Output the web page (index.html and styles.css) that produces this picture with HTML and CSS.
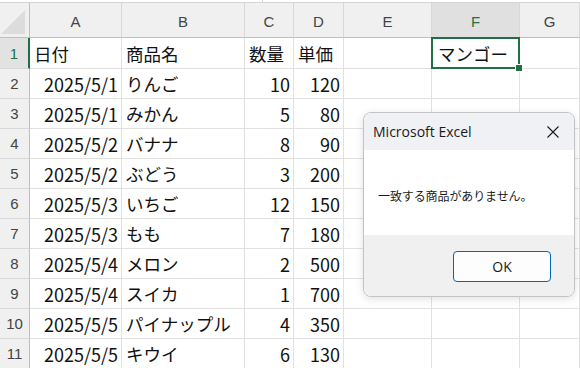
FILE: index.html
```html
<!DOCTYPE html>
<html lang="ja">
<head>
    <meta charset="UTF-8">
    <title>Microsoft Excel</title>
    <link rel="stylesheet" href="styles.css">
</head>
<body>
    <div class="sheet">
        <div class="topbar">
            <div class="namebox"></div>
            <div class="formula"></div>
        </div>
        <div class="row head">
            <div class="corner"></div>
            <div class="colhead">A</div>
            <div class="colhead">B</div>
            <div class="colhead">C</div>
            <div class="colhead">D</div>
            <div class="colhead">E</div>
            <div class="colhead sel">F</div>
            <div class="colhead">G</div>
        </div>
        <div class="row first">
            <div class="rowhead sel">1</div>
            <div class="cell">日付</div>
            <div class="cell">商品名</div>
            <div class="cell">数量</div>
            <div class="cell">単価</div>
            <div class="cell"></div>
            <div class="cell active">マンゴー</div>
            <div class="cell"></div>
        </div>
        <div class="row">
            <div class="rowhead">2</div>
            <div class="cell num">2025/5/1</div>
            <div class="cell">りんご</div>
            <div class="cell num">10</div>
            <div class="cell num">120</div>
            <div class="cell"></div><div class="cell"></div><div class="cell"></div>
        </div>
        <div class="row">
            <div class="rowhead">3</div>
            <div class="cell num">2025/5/1</div>
            <div class="cell">みかん</div>
            <div class="cell num">5</div>
            <div class="cell num">80</div>
            <div class="cell"></div><div class="cell"></div><div class="cell"></div>
        </div>
        <div class="row">
            <div class="rowhead">4</div>
            <div class="cell num">2025/5/2</div>
            <div class="cell">バナナ</div>
            <div class="cell num">8</div>
            <div class="cell num">90</div>
            <div class="cell"></div><div class="cell"></div><div class="cell"></div>
        </div>
        <div class="row">
            <div class="rowhead">5</div>
            <div class="cell num">2025/5/2</div>
            <div class="cell">ぶどう</div>
            <div class="cell num">3</div>
            <div class="cell num">200</div>
            <div class="cell"></div><div class="cell"></div><div class="cell"></div>
        </div>
        <div class="row">
            <div class="rowhead">6</div>
            <div class="cell num">2025/5/3</div>
            <div class="cell">いちご</div>
            <div class="cell num">12</div>
            <div class="cell num">150</div>
            <div class="cell"></div><div class="cell"></div><div class="cell"></div>
        </div>
        <div class="row">
            <div class="rowhead">7</div>
            <div class="cell num">2025/5/3</div>
            <div class="cell">もも</div>
            <div class="cell num">7</div>
            <div class="cell num">180</div>
            <div class="cell"></div><div class="cell"></div><div class="cell"></div>
        </div>
        <div class="row">
            <div class="rowhead">8</div>
            <div class="cell num">2025/5/4</div>
            <div class="cell">メロン</div>
            <div class="cell num">2</div>
            <div class="cell num">500</div>
            <div class="cell"></div><div class="cell"></div><div class="cell"></div>
        </div>
        <div class="row">
            <div class="rowhead">9</div>
            <div class="cell num">2025/5/4</div>
            <div class="cell">スイカ</div>
            <div class="cell num">1</div>
            <div class="cell num">700</div>
            <div class="cell"></div><div class="cell"></div><div class="cell"></div>
        </div>
        <div class="row">
            <div class="rowhead">10</div>
            <div class="cell num">2025/5/5</div>
            <div class="cell">パイナップル</div>
            <div class="cell num">4</div>
            <div class="cell num">350</div>
            <div class="cell"></div><div class="cell"></div><div class="cell"></div>
        </div>
        <div class="row">
            <div class="rowhead">11</div>
            <div class="cell num">2025/5/5</div>
            <div class="cell">キウイ</div>
            <div class="cell num">6</div>
            <div class="cell num">130</div>
            <div class="cell"></div><div class="cell"></div><div class="cell"></div>
        </div>
    </div>

    <div class="dialog">
        <div class="dialog-title">
            <span>Microsoft Excel</span>
            <svg class="close" width="12" height="12" viewBox="0 0 12 12">
                <path d="M0.5 0.5 L11.5 11.5 M11.5 0.5 L0.5 11.5" stroke="#1a1a1a" stroke-width="1.1" fill="none"/>
            </svg>
        </div>
        <div class="dialog-body">一致する商品がありません。</div>
        <div class="dialog-foot">
            <button type="button" class="ok">OK</button>
        </div>
    </div>
</body>
</html>
```

FILE: styles.css
```css
body {
    margin: 0;
    background-color: #fff;
    overflow: hidden;
    font-family: "Noto Sans CJK JP", sans-serif;
}
.sheet {
    width: 580px;
}
.topbar {
    display: flex;
    height: 3px;
    border-bottom: 1px solid #d4d4d4;
    box-sizing: border-box;
}
.namebox {
    width: 29px;
}
.formula {
    flex: 1;
    margin-left: 233px;
    border-left: 1px solid #d4d4d4;
}
.row {
    display: grid;
    grid-template-columns: 30px 92px 123px 49px 50px 88px 88px 1fr;
    height: 30px;
}
.row.head {
    height: 35px;
}
.row.first {
    height: 31px;
}
.corner {
    position: relative;
    background-color: #f0f0f0;
    border-right: 1px solid #bfbfbf;
    border-bottom: 1px solid #bfbfbf;
}
.corner::after {
    content: "";
    position: absolute;
    right: 4px;
    bottom: 3px;
    border-left: 24px solid transparent;
    border-bottom: 24px solid #dcdcdc;
}
.colhead {
    background-color: #f0f0f0;
    border-right: 1px solid #d8d8d8;
    border-bottom: 1px solid #bfbfbf;
    color: #444;
    font-family: "Liberation Sans", Arial, sans-serif;
    font-size: 15px;
    display: flex;
    align-items: center;
    justify-content: center;
    padding-top: 2px;
}
.colhead.sel {
    background-color: #e0e0e0;
    color: #1e7145;
}
.rowhead {
    background-color: #f0f0f0;
    border-right: 1px solid #bfbfbf;
    border-bottom: 1px solid #d8d8d8;
    color: #444;
    font-family: "Liberation Sans", Arial, sans-serif;
    font-size: 15px;
    display: flex;
    align-items: center;
    justify-content: center;
}
.rowhead.sel {
    background-color: #e2e2e2;
    color: #1e7145;
    border-right: 2px solid #1e7145;
}
.cell {
    border-right: 1px solid #e1e1e1;
    border-bottom: 1px solid #e1e1e1;
    color: #111;
    font-size: 17.5px;
    display: flex;
    align-items: center;
    padding: 0 4px;
    white-space: nowrap;
    overflow: hidden;
}
.cell.num {
    justify-content: flex-end;
    font-size: 18px;
    padding-right: 3px;
}
.cell.active {
    position: relative;
    overflow: visible;
    padding-left: 6px;
}
.cell.active::before {
    content: "";
    position: absolute;
    left: -1px;
    top: -1px;
    right: -1px;
    bottom: -1px;
    border: 2px solid #1e7145;
}
.cell.active::after {
    content: "";
    position: absolute;
    right: -4px;
    bottom: -4px;
    width: 6px;
    height: 6px;
    background-color: #1e7145;
    border: 1px solid #fff;
}
.dialog {
    position: absolute;
    left: 363px;
    top: 112px;
    width: 212px;
    height: 185px;
    border: 1px solid #c4c4c4;
    border-radius: 8px;
    box-sizing: border-box;
    overflow: hidden;
    background-color: #fff;
    box-shadow: 0 2px 8px rgba(0, 0, 0, 0.12);
    display: flex;
    flex-direction: column;
}
.dialog-title {
    height: 37px;
    background-color: #f0f1f5;
    display: flex;
    align-items: center;
    justify-content: space-between;
    padding: 0 15px 0 9px;
    font-family: "Open Sans", "Noto Sans", sans-serif;
    font-size: 14px;
    color: #1a1a1a;
}
.dialog-body {
    height: 85px;
    display: flex;
    align-items: center;
    padding: 0 0 0 14px;
    font-size: 12px;
    letter-spacing: -0.1px;
    color: #1a1a1a;
    padding-top: 6px;
    box-sizing: border-box;
}
.dialog-foot {
    flex: 1;
    background-color: #f0f0f0;
    display: flex;
    justify-content: flex-end;
    align-items: flex-start;
    padding: 16px 23px 0 0;
}
.ok {
    width: 98px;
    height: 31px;
    border: 1px solid #0067c0;
    border-radius: 4px;
    background-color: #fdfdfd;
    font-family: "Open Sans", "Noto Sans", sans-serif;
    font-size: 14px;
    color: #1a1a1a;
}
```
